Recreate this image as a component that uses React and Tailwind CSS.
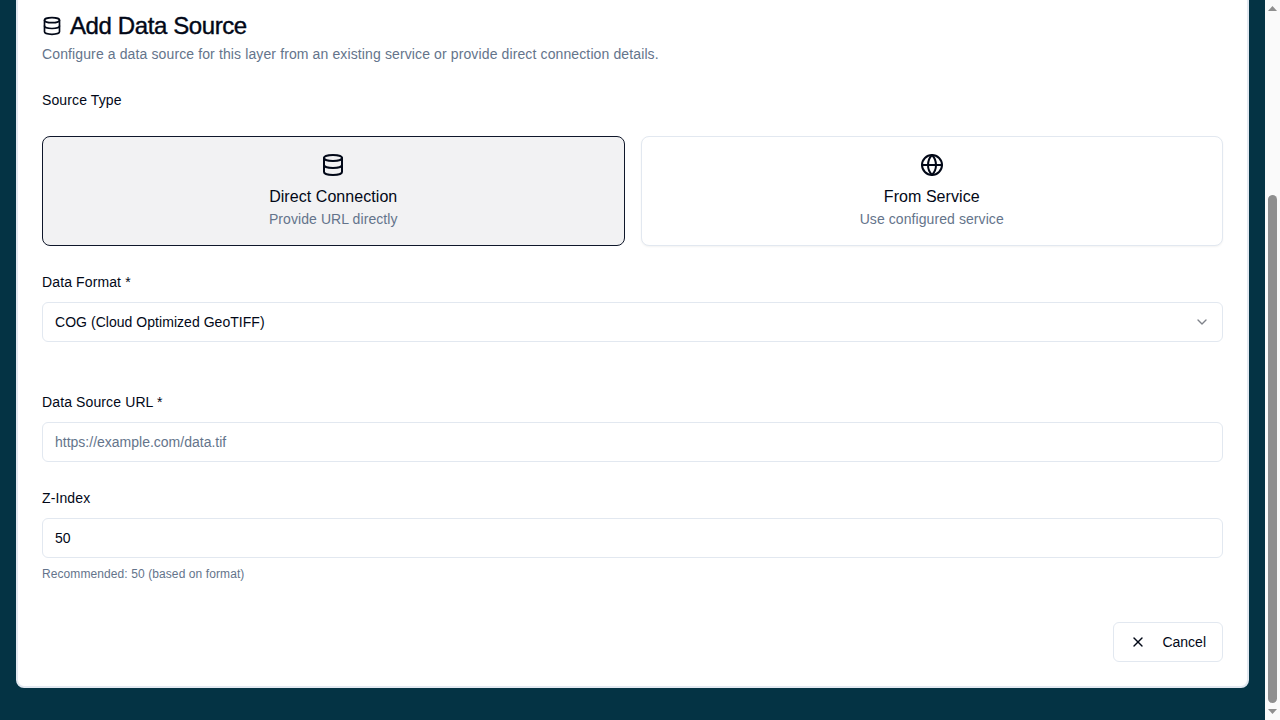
import { ChevronDown, Database, Globe, X } from "lucide-react";

const labelStyle = "block text-sm leading-5 font-medium tracking-[0.12px] text-[#020817]";
const fieldStyle =
  "w-full h-10 rounded-md border border-[#e2e8f0] bg-white px-3 text-sm text-[#020817] placeholder:text-[#64748b] outline-none";

const SourceCard = ({ icon: Icon, title, subtitle, active }) => (
  <button
    type="button"
    className={`flex flex-col items-center gap-2 rounded-lg border p-4 ${
      active ? "border-[#0f172a] bg-[#f2f2f3]" : "border-[#e2e8f0] bg-white shadow-xs"
    }`}
  >
    <Icon className="w-6 h-6 text-[#020817]" />
    <span className="flex flex-col items-center">
      <span className="text-base leading-6 font-medium tracking-[0.06px] text-[#020817]">{title}</span>
      <span className="text-sm leading-5 tracking-[0.08px] text-[#64748b]">{subtitle}</span>
    </span>
  </button>
);

const App = () => {
  return (
    <div className="flex h-screen bg-[#043344] font-['Liberation_Sans',sans-serif]">
      {/* Page is shown scrolled to the bottom, so the overflow goes off the top */}
      <div className="flex-1 min-w-0 flex flex-col justify-end overflow-hidden px-4 pb-8">
        <div className="shrink-0 rounded-lg border-2 border-[#e2e8f0] bg-white px-6 pb-6 pt-[218px]">
          <h2 className="flex items-center gap-2 text-2xl leading-8 font-normal tracking-[-0.4px] [-webkit-text-stroke:0.4px] text-[#020817]">
            <Database className="w-5 h-5" />
            Add Data Source
          </h2>
          <p className="mt-0.5 text-sm leading-5 tracking-[0.12px] text-[#64748b]">
            Configure a data source for this layer from an existing service or provide direct connection details.
          </p>

          <label className={`${labelStyle} mt-[26px]`}>Source Type</label>
          <div className="mt-[26px] grid grid-cols-2 gap-4">
            <SourceCard icon={Database} title="Direct Connection" subtitle="Provide URL directly" active />
            <SourceCard icon={Globe} title="From Service" subtitle="Use configured service" />
          </div>

          <label className={`${labelStyle} mt-[26px]`}>Data Format *</label>
          <button
            type="button"
            className="mt-2.5 flex w-full h-10 items-center justify-between rounded-md border border-[#e2e8f0] bg-white px-3 text-sm tracking-[0.04px] text-[#020817]"
          >
            COG (Cloud Optimized GeoTIFF)
            <ChevronDown className="w-4 h-4 text-[#020817] opacity-50" />
          </button>

          <label className={`${labelStyle} mt-[50px]`}>Data Source URL *</label>
          <input className={`${fieldStyle} mt-2.5`} placeholder="https://example.com/data.tif" />

          <label className={`${labelStyle} mt-[26px]`}>Z-Index</label>
          <input className={`${fieldStyle} mt-2.5`} type="number" defaultValue={50} />
          <p className="mt-2 text-xs leading-4 tracking-[0.09px] text-[#64748b]">Recommended: 50 (based on format)</p>

          <div className="mt-10 flex justify-end">
            <button
              type="button"
              className="flex h-10 items-center gap-4 rounded-md border border-[#e2e8f0] bg-white px-4 text-sm font-medium text-[#020817]"
            >
              <X className="w-4 h-4" />
              Cancel
            </button>
          </div>
        </div>
      </div>

      {/* Browser scrollbar */}
      <div className="w-[15px] shrink-0 flex flex-col items-center bg-[#fafafa]">
        <svg className="w-[15px] h-[17px] shrink-0" viewBox="0 0 15 17">
          <path d="M3 11 L7.5 6 L12 11 Z" fill="#8f8f8f" />
        </svg>
        <div className="h-[178px] shrink-0" />
        <div className="w-[9px] h-[508px] shrink-0 rounded-t-full rounded-b-full bg-[#8f8f8f]" />
        <div className="flex-1" />
        <svg className="w-[15px] h-[17px] shrink-0" viewBox="0 0 15 17">
          <path d="M3 6 L7.5 11 L12 6 Z" fill="#8f8f8f" />
        </svg>
      </div>
    </div>
  );
};

export default App;
